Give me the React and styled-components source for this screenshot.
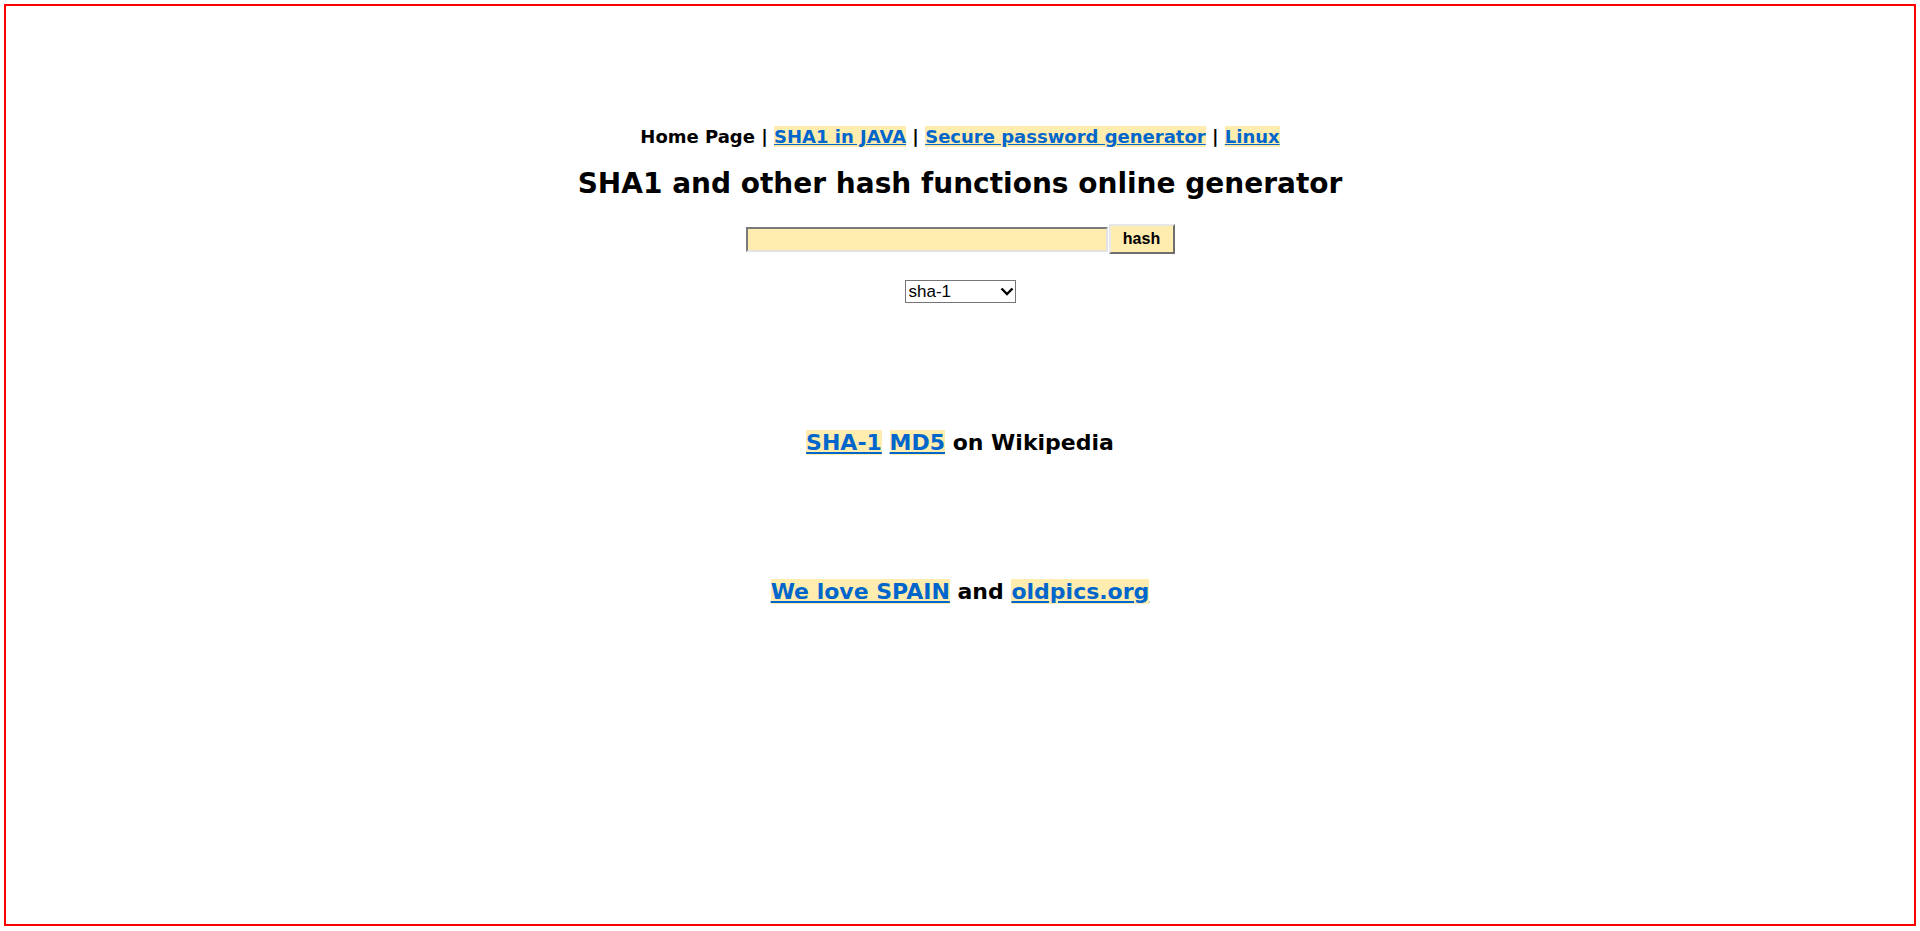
import React from 'react'
import styled, { createGlobalStyle } from 'styled-components'

const GlobalStyle = createGlobalStyle`
  body {
    margin: 0;
    background: #fff;
    font-family: "DejaVu Sans", Verdana, sans-serif;
  }
`

const Frame = styled.div`
  box-sizing: border-box;
  margin: 4px;
  height: 922px;
  border: 2px solid #ff0000;
  display: flex;
  flex-direction: column;
  align-items: center;
  padding-top: 117px;
`

const Nav = styled.div`
  font-size: 18px;
  font-weight: bold;
  line-height: 28px;
  color: #000;
`

const Link = styled.a`
  color: #0066cc;
  background: #ffecaf;
  text-decoration: underline;
`

const Title = styled.h1`
  margin: 14px 0 0;
  font-size: 28px;
  line-height: 38px;
  font-weight: bold;
`

const HashForm = styled.form`
  display: flex;
  align-items: center;
  margin-top: 21px;
`

const Field = styled.input`
  box-sizing: border-box;
  width: 362px;
  height: 25px;
  margin: 0;
  background: #ffecaf;
  border: 2px solid;
  border-color: #7a7a7a #e2e2e2 #e2e2e2 #7a7a7a;
  outline: none;
`

const HashButton = styled.button`
  box-sizing: border-box;
  width: 66px;
  height: 30px;
  margin: 0 0 0 1px;
  padding: 0;
  background: #ffecaf;
  border: 2px solid;
  border-color: #e8e8e8 #6e6e6e #6e6e6e #e8e8e8;
  font-family: "Liberation Sans", Arial, sans-serif;
  font-weight: bold;
  font-size: 16px;
  color: #000;
`

const SelectWrap = styled.div`
  position: relative;
  margin-top: 26px;
  width: 111px;
  height: 23px;
`

const AlgoSelect = styled.select`
  box-sizing: border-box;
  -webkit-appearance: none;
  appearance: none;
  width: 100%;
  height: 100%;
  margin: 0;
  padding: 0 0 0 3px;
  font-family: "Liberation Sans", Arial, sans-serif;
  font-size: 17px;
  background: #fff;
  border: 1px solid #767676;
  border-radius: 0;
  color: #000;
`

const Chevron = styled.svg`
  position: absolute;
  right: 2px;
  top: 7px;
  width: 14px;
  height: 9px;
  pointer-events: none;
`

const BigLine = styled.div`
  margin-top: ${(props) => props.gap}px;
  font-size: 22px;
  font-weight: bold;
  line-height: 30px;
  color: #000;
`

const App = () => {
  return (
    <>
      <GlobalStyle />
      <Frame>
        <Nav>
          Home Page | <Link href="#">SHA1 in JAVA</Link> | <Link href="#">Secure password generator</Link> | <Link href="#">Linux</Link>
        </Nav>
        <Title>SHA1 and other hash functions online generator</Title>
        <HashForm onSubmit={(e) => e.preventDefault()}>
          <Field type="text" />
          <HashButton type="submit">hash</HashButton>
        </HashForm>
        <SelectWrap>
          <AlgoSelect defaultValue="sha1">
            <option value="sha1">sha-1</option>
            <option value="md5">md5</option>
            <option value="sha256">sha-256</option>
          </AlgoSelect>
          <Chevron viewBox="0 0 14 9">
            <path d="M1.5 1.5 L7 7 L12.5 1.5" fill="none" stroke="#000" strokeWidth="2.4" />
          </Chevron>
        </SelectWrap>
        <BigLine gap={125}>
          <Link href="#">SHA-1</Link> <Link href="#">MD5</Link> on Wikipedia
        </BigLine>
        <BigLine gap={119}>
          <Link href="#">We love SPAIN</Link> and <Link href="#">oldpics.org</Link>
        </BigLine>
      </Frame>
    </>
  )
}

export default App
